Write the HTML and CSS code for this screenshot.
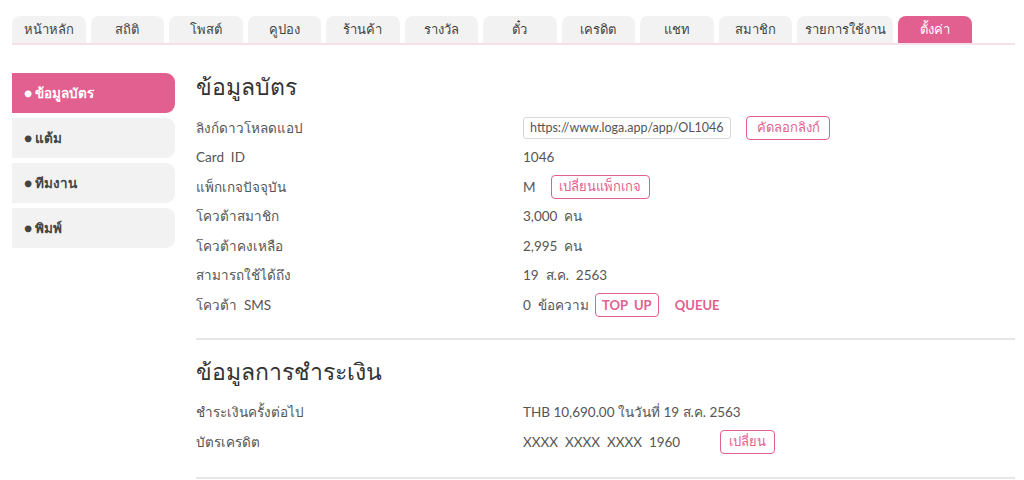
FILE: index.html
```html
<!DOCTYPE html>
<html lang="th">
<head>
<meta charset="utf-8">
<link rel="stylesheet" href="styles.css">
</head>
<body>
<nav class="tabs">
  <a class="tab">หน้าหลัก</a>
  <a class="tab">สถิติ</a>
  <a class="tab">โพสต์</a>
  <a class="tab">คูปอง</a>
  <a class="tab">ร้านค้า</a>
  <a class="tab">รางวัล</a>
  <a class="tab">ตั๋ว</a>
  <a class="tab">เครดิต</a>
  <a class="tab">แชท</a>
  <a class="tab">สมาชิก</a>
  <a class="tab">รายการใช้งาน</a>
  <a class="tab active">ตั้งค่า</a>
</nav>
<div class="main">
  <aside class="side">
    <a class="side-item active">● ข้อมูลบัตร</a>
    <a class="side-item">● แต้ม</a>
    <a class="side-item">● ทีมงาน</a>
    <a class="side-item">● พิมพ์</a>
  </aside>
  <section class="content">
    <div class="block">
      <h2 class="title">ข้อมูลบัตร</h2>
      <div class="row"><span class="label">ลิงก์ดาวโหลดแอป</span><span class="value"><span class="input">https://www.loga.app/app/OL1046</span><button class="btn btn-copy">คัดลอกลิงก์</button></span></div>
      <div class="row"><span class="label">Card&nbsp; ID</span><span class="value">1046</span></div>
      <div class="row"><span class="label">แพ็กเกจปัจจุบัน</span><span class="value">M<button class="btn btn-pkg">เปลี่ยนแพ็กเกจ</button></span></div>
      <div class="row"><span class="label">โควต้าสมาชิก</span><span class="value">3,000&nbsp; คน</span></div>
      <div class="row"><span class="label">โควต้าคงเหลือ</span><span class="value">2,995&nbsp; คน</span></div>
      <div class="row"><span class="label">สามารถใช้ได้ถึง</span><span class="value">19&nbsp; ส.ค.&nbsp; 2563</span></div>
      <div class="row"><span class="label">โควต้า&nbsp; SMS</span><span class="value">0&nbsp; ข้อความ<button class="btn btn-top">TOP&nbsp; UP</button><a class="link">QUEUE</a></span></div>
    </div>
    <div class="block block-last">
      <h2 class="title">ข้อมูลการชำระเงิน</h2>
      <div class="row"><span class="label">ชำระเงินครั้งต่อไป</span><span class="value">THB 10,690.00 ในวันที่ 19 ส.ค. 2563</span></div>
      <div class="row"><span class="label">บัตรเครดิต</span><span class="value"><span class="card-no">XXXX&nbsp; XXXX&nbsp; XXXX&nbsp; 1960</span><button class="btn btn-change">เปลี่ยน</button></span></div>
    </div>
  </section>
</div>
</body>
</html>
```
FILE: styles.css
```css
* { box-sizing: border-box; }
body {
  margin: 0;
  background: #fff;
  font-family: "Lato", "Noto Sans", "Liberation Sans", sans-serif;
  color: #555;
}
.tabs {
  display: flex;
  gap: 5px;
  margin: 16px 0 0 12px;
  width: 1003px;
  border-bottom: 2px solid #f6e1e8;
}
.tab {
  min-width: 73.5px;
  height: 27px;
  padding: 0 7.5px;
  display: flex;
  align-items: center;
  justify-content: center;
  background: #f2f2f2;
  border-radius: 8px 8px 0 0;
  font-size: 13px;
  color: #444;
  white-space: nowrap;
}
.tab.active { background: #e2608f; color: #fff; }
.main {
  display: flex;
  padding: 28px 0 0 12px;
}
.side {
  width: 163px;
  display: flex;
  flex-direction: column;
  gap: 5px;
}
.side-item {
  height: 40px;
  display: flex;
  align-items: center;
  padding-left: 12px;
  background: #f2f2f2;
  border-radius: 0 9px 9px 0;
  font-size: 13.5px;
  font-weight: bold;
  color: #444;
}
.side-item.active { background: #e2608f; color: #fff; }
.content {
  width: 819px;
  margin-left: 21px;
}
.block { border-bottom: 2px solid #e6e6e6; padding-bottom: 18px; margin-bottom: 18px; }
.block-last { padding-bottom: 20px; }
.title {
  margin: 0 0 12px;
  height: 28px;
  display: flex;
  align-items: center;
  font-size: 23px;
  font-weight: normal;
  color: #333;
}
.row {
  display: flex;
  align-items: center;
  height: 29.5px;
  font-size: 13.5px;
}
.label { width: 327px; }
.value { display: flex; align-items: center; white-space: nowrap; }
.input {
  display: inline-flex;
  align-items: center;
  width: 208px;
  height: 22px;
  padding: 0 6px;
  border: 1px solid #d6d6d6;
  border-radius: 3px;
  font-size: 12.5px;
  overflow: hidden;
}
.card-no { width: 197px; }
.btn {
  font-family: inherit;
  background: #fff;
  border: 1px solid #e2608f;
  color: #e2608f;
  border-radius: 4px;
  height: 24px;
  padding: 0;
  font-size: 13px;
  white-space: nowrap;
}
.btn-copy { margin-left: 15px; width: 84px; }
.btn-pkg { margin-left: 15px; width: 99px; }
.btn-top { margin-left: 6px; width: 64px; font-weight: bold; }
.btn-change { width: 55px; }
.link { margin-left: 16px; color: #e2608f; font-weight: bold; font-size: 13px; }
```
